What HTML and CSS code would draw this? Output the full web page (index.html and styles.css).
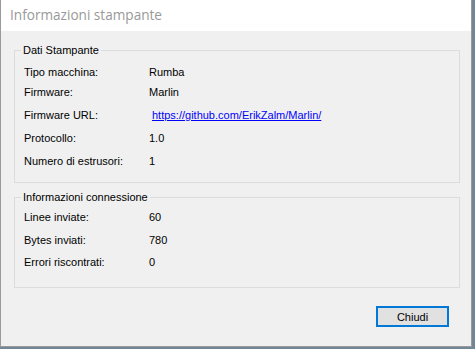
FILE: index.html
```html
<!DOCTYPE html>
<html>
<head>
	<title>Informazioni stampante</title>
	<link rel="stylesheet" href="styles.css">
</head>
<body>
	<div class="window">
		<div class="titlebar">Informazioni stampante</div>
		<div class="content">
			<fieldset class="group group-printer">
				<legend>Dati Stampante</legend>
				<div class="row"><span class="label">Tipo macchina:</span><span class="value">Rumba</span></div>
				<div class="row"><span class="label">Firmware:</span><span class="value">Marlin</span></div>
				<div class="row"><span class="label">Firmware URL:</span><a class="value link" href="#">https://github.com/ErikZalm/Marlin/</a></div>
				<div class="row"><span class="label">Protocollo:</span><span class="value">1.0</span></div>
				<div class="row"><span class="label">Numero di estrusori:</span><span class="value">1</span></div>
			</fieldset>
			<fieldset class="group group-connection">
				<legend>Informazioni connessione</legend>
				<div class="row"><span class="label">Linee inviate:</span><span class="value">60</span></div>
				<div class="row"><span class="label">Bytes inviati:</span><span class="value">780</span></div>
				<div class="row"><span class="label">Errori riscontrati:</span><span class="value">0</span></div>
			</fieldset>
			<div class="footer">
				<button class="btn-close">Chiudi</button>
			</div>
		</div>
	</div>
</body>
</html>
```

FILE: styles.css
```css
body {
	margin: 0;
	padding: 0;
	background-color: #6f8796;
	font-family: 'Liberation Sans', Arial, sans-serif;
	font-size: 11px;
	color: #000;
}

.window {
	width: 470px;
	height: 346px;
	background-color: #f0f0f0;
	border: 1px solid #9a9a9a;
	border-top: none;
	display: flex;
	flex-direction: column;
}

.titlebar {
	height: 31px;
	line-height: 30px;
	padding-left: 9px;
	background-color: #fff;
	color: #999;
	font-family: 'Open Sans', sans-serif;
	font-size: 13.6px;
}

.content {
	padding: 13px 11px 0 13px;
}

.group {
	margin: 0;
	padding: 0 0 0 9px;
	border: 1px solid #dcdcdc;
	min-width: 0;
}

.group legend {
	margin-left: -3px;
	padding: 0 2px;
	line-height: 13px;
}

.row {
	display: flex;
	line-height: 13px;
	margin-top: 10px;
}

.label {
	width: 125px;
}

.link {
	margin-left: 3px;
	color: #0000ff;
	text-decoration: underline;
}

.group-printer {
	padding-bottom: 14px;
}

.group-printer .row:nth-of-type(1) {
	margin-top: 9px;
}

.group-printer .row:nth-of-type(2) {
	margin-top: 7px;
}

.group-connection {
	margin-top: 8px;
	padding-bottom: 18px;
}

.group-connection .row:nth-of-type(1) {
	margin-top: 7px;
}

.group-connection .row:nth-of-type(3) {
	margin-top: 9px;
}

.footer {
	display: flex;
	justify-content: flex-end;
	padding: 18px 11px 0 0;
}

.btn-close {
	width: 73px;
	height: 21px;
	padding: 0;
	border: 2px solid #0078d7;
	background-color: #e1e1e1;
	font-family: 'Liberation Sans', Arial, sans-serif;
	font-size: 11px;
	color: #000;
}
```
